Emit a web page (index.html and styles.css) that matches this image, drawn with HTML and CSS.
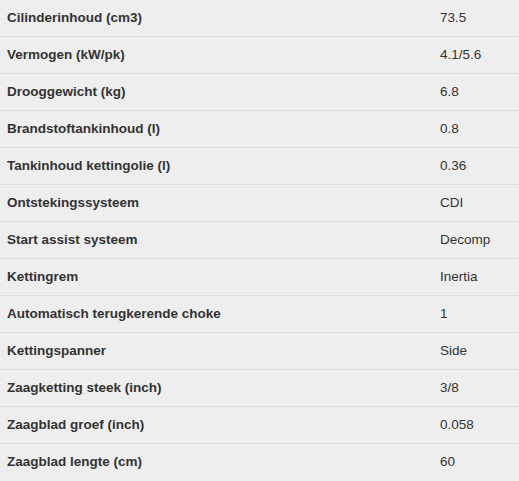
FILE: index.html
```html
<!DOCTYPE html>
<html>
<head>
<meta charset="utf-8">
<link rel="stylesheet" href="styles.css">
</head>
<body>
<table class="specs">
<tbody>
<tr><td class="label">Cilinderinhoud (cm3)</td><td class="value">73.5</td></tr>
<tr><td class="label">Vermogen (kW/pk)</td><td class="value">4.1/5.6</td></tr>
<tr><td class="label">Drooggewicht (kg)</td><td class="value">6.8</td></tr>
<tr><td class="label">Brandstoftankinhoud (l)</td><td class="value">0.8</td></tr>
<tr><td class="label">Tankinhoud kettingolie (l)</td><td class="value">0.36</td></tr>
<tr><td class="label">Ontstekingssysteem</td><td class="value">CDI</td></tr>
<tr><td class="label">Start assist systeem</td><td class="value">Decomp</td></tr>
<tr><td class="label">Kettingrem</td><td class="value">Inertia</td></tr>
<tr><td class="label">Automatisch terugkerende choke</td><td class="value">1</td></tr>
<tr><td class="label">Kettingspanner</td><td class="value">Side</td></tr>
<tr><td class="label">Zaagketting steek (inch)</td><td class="value">3/8</td></tr>
<tr><td class="label">Zaagblad groef (inch)</td><td class="value">0.058</td></tr>
<tr><td class="label">Zaagblad lengte (cm)</td><td class="value">60</td></tr>
</tbody>
</table>
</body>
</html>
```
FILE: styles.css
```css
html, body {
  margin: 0;
  padding: 0;
  background: #eeeeee;
}
.specs {
  width: 519px;
  border-collapse: collapse;
  font-family: "Liberation Sans", Arial, sans-serif;
  font-size: 13.5px;
  color: #333333;
}
.specs td {
  height: 37px;
  padding: 0 7px;
  border-bottom: 1px solid #dddddd;
  vertical-align: middle;
  box-sizing: border-box;
}
.specs tr:first-child td {
  height: 36px;
}
.specs tr:last-child td {
  border-bottom: none;
}
.label {
  width: 433px;
  font-weight: bold;
}
.value {
  font-weight: normal;
}
```
